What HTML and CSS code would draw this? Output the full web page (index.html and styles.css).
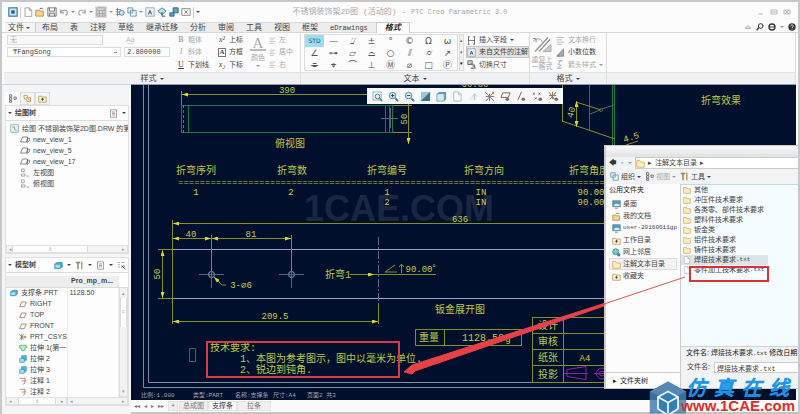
FILE: index.html
```html
<!DOCTYPE html>
<html lang="zh-CN">
<head>
<meta charset="utf-8">
<title>不锈钢装饰架2D图 (活动的) - PTC Creo Parametric 3.0</title>
<link rel="stylesheet" href="styles.css">
</head>
<body>
<svg class="defs" aria-hidden="true">
  <symbol id="i-app" viewBox="0 0 12 12"><rect x="1" y="1" width="10" height="10" fill="#cfe6ef" stroke="#2f7e9c" stroke-width="1.4"/><rect x="4" y="4" width="4" height="4" fill="#1d5f7c"/></symbol>
  <symbol id="i-new" viewBox="0 0 12 12"><path d="M2.5 1h5l3 3v7.500h-8zM7.500 1v3h3" fill="#fff" stroke="#999"/></symbol>
  <symbol id="i-open" viewBox="0 0 12 12"><path d="M1 4h4l1 1h4v6H1z" fill="#f4d58c" stroke="#b58f3d"/><path d="M5 3c1-2 4-2 5 0" fill="none" stroke="#555"/></symbol>
  <symbol id="i-save" viewBox="0 0 12 12"><path d="M1 1h10v10H1zM3 1v4h6V1M3 11V7.500h6V11" fill="#eee" stroke="#666"/></symbol>
  <symbol id="i-undo" viewBox="0 0 12 12"><path d="M2 3v4h4M2 6c2-3 8-3 8 1 0 2-1 2-2 3" fill="none" stroke="#999" stroke-width="1.300"/></symbol>
  <symbol id="i-redo" viewBox="0 0 12 12"><path d="M10 3v4H6M10 6c-2-3-8-3-8 1 0 2 1 2 2 3" fill="none" stroke="#aaa" stroke-width="1.300"/></symbol>
  <symbol id="i-grid" viewBox="0 0 12 12"><path d="M1 1h10v10H1zM1 4h10M4 4v7M8 4v7M1 8h10" fill="none" stroke="#999"/></symbol>
  <symbol id="i-regen" viewBox="0 0 12 12"><path d="M1 3h6M1 6h5M1 9h5M3 1v10" stroke="#777" fill="none"/><circle cx="8" cy="7" r="3" fill="#c7e4f1" stroke="#39809f"/></symbol>
  <symbol id="i-boxes" viewBox="0 0 12 12"><path d="M1 1h6v6H1zM4 4h7v7H4z" fill="#e9f3f8" stroke="#5892aa"/></symbol>
  <symbol id="i-note" viewBox="0 0 12 12"><rect x="1" y="1" width="10" height="10" fill="#eaf2f6" stroke="#8da3af"/><path d="M4 9l2-5 2 5M5 7h2" fill="none" stroke="#345"/></symbol>
  <symbol id="i-dim" viewBox="0 0 12 12"><path d="M1 5l5-4 5 4-5 4z" fill="#bfe0ee" stroke="#2d7695"/><path d="M6 6v5h4" fill="none" stroke="#333"/></symbol>
  <symbol id="i-find" viewBox="0 0 12 12"><path d="M1 7h5v4H1zM5 1h6v6H5z" fill="#5aa6c5" stroke="#235e79"/></symbol>
  <symbol id="i-close" viewBox="0 0 12 12"><path d="M1 2h10v8H1zM4 4l4 4M8 4l-4 4" fill="none" stroke="#777"/></symbol>
  <symbol id="i-lines" viewBox="0 0 12 12"><path d="M1 2h10M1 5h7M1 8h10M1 11h7" stroke="#bbb" stroke-width="1.200"/></symbol>
  <symbol id="i-folder" viewBox="0 0 12 12"><path d="M1 2h4l1 2h5v7H1z" fill="#fbedc2" stroke="#d1a850"/></symbol>
  <symbol id="i-file" viewBox="0 0 12 12"><path d="M2 1h5l3 3v7H2zM7 1v3h3" fill="#fff" stroke="#b5b5b5"/></symbol>
  <symbol id="i-sheet" viewBox="0 0 12 12"><path d="M2 1h8v10H2zM4 4h4M4 6h4M4 8h4" fill="#fff" stroke="#888"/></symbol>
  <symbol id="i-draw" viewBox="0 0 12 12"><rect x="1" y="1" width="10" height="10" fill="#e8f1f3" stroke="#88a5ad"/><path d="M3 4h3v3l3 2" fill="none" stroke="#4f9a77"/></symbol>
  <symbol id="i-view" viewBox="0 0 16 12"><path d="M1 10L4 2h8v6l-3 2zM12 4h3v4l-4 3V6z" fill="#fff" stroke="#444"/></symbol>
  <symbol id="i-ortho" viewBox="0 0 14 12"><path d="M2 1h4v4H2zM2 8h5v3H2zM9 11h4" fill="#fff" stroke="#888"/></symbol>
  <symbol id="i-tree" viewBox="0 0 12 12"><path d="M2 1h3v3H2zM2 5h3v3H2zM2 9h3v2H2zM8 4h3v3H8z" fill="none" stroke="#555"/></symbol>
  <symbol id="i-layers" viewBox="0 0 12 12"><path d="M1 2h5v3h4v5H5V7H2zM4 4l6 5" fill="#fff2d4" stroke="#bd9243"/></symbol>
  <symbol id="i-fav" viewBox="0 0 12 12"><path d="M1 3h4l1 1h5v7H1z" fill="#fdf1cd" stroke="#b79653"/><path d="M6 5v4M4 7h4" stroke="#333"/></symbol>
  <symbol id="i-part" viewBox="0 0 12 12"><path d="M1 4l3-2h7v6l-3 2H1z" fill="#4aa9cc" stroke="#3790b4"/><path d="M2 5h6v4H2z" fill="#aee2f2"/></symbol>
  <symbol id="i-plane" viewBox="0 0 12 12"><path d="M1 10l3-7h7L8 10z" fill="none" stroke="#8b5c3c"/></symbol>
  <symbol id="i-csys" viewBox="0 0 12 12"><path d="M4 1v10M4 6h7M1 2l6 8M1 10l6-8M9 4v4" fill="none" stroke="#75563f"/></symbol>
  <symbol id="i-ext1" viewBox="0 0 12 12"><path d="M1 2h10v4H9l-1 4H4L3 6H1z" fill="#baf0c4" stroke="#36a356"/></symbol>
  <symbol id="i-ext2" viewBox="0 0 12 12"><path d="M1 5h7v6H1z" fill="#a7e0f2" stroke="#2e92b3"/><path d="M4 1h7v7H8V5H4z" fill="#54b5d4" stroke="#2e92b3"/></symbol>
  <symbol id="i-annot" viewBox="0 0 12 12"><path d="M1 2h8v4H4M9 4v5l-3 2" fill="none" stroke="#a05a4a"/></symbol>
  <symbol id="i-tools" viewBox="0 0 12 12"><path d="M1 2h6M4 2v9" stroke="#8a8470" stroke-width="2"/><path d="M9 1v10" stroke="#c39b54" stroke-width="2"/></symbol>
  <symbol id="i-filter" viewBox="0 0 12 12"><path d="M1 2h3M1 5h3M1 8h3M6 2h4" stroke="#999"/><path d="M6 6l5 5M6 9c2-4 4-2 5-1" stroke="#333" fill="none"/></symbol>
  <symbol id="i-desk" viewBox="0 0 12 12"><rect x="1" y="1" width="10" height="8" fill="#4c9fc4" stroke="#698696"/><path d="M2 8c2-4 5-3 8-2v2z" fill="#d5eef3"/><path d="M4 11h4" stroke="#777"/></symbol>
  <symbol id="i-net" viewBox="0 0 12 12"><circle cx="5" cy="5" r="4" fill="#61b6d8" stroke="#2c7b9d"/><path d="M1 5h8M5 1v8" stroke="#b7e17e"/><path d="M7 7h4v4H7z" fill="#4f7f9e"/></symbol>
  <symbol id="i-zoom" viewBox="0 0 12 12"><path d="M1 1h9v9H1z" fill="#eef4f7" stroke="#9db4c0"/><circle cx="6" cy="6" r="2.500" fill="#e3f3fa" stroke="#3a7ca0"/><path d="M8 8l3 3" stroke="#3a7ca0" stroke-width="1.500"/></symbol>
  <symbol id="i-help" viewBox="0 0 12 12"><circle cx="6" cy="6" r="5.500" fill="#333"/><path d="M4 5c0-3 4-2.500 4-.5C8 6 6 6 6 7.500M6 8.500V10" stroke="#fff" stroke-width="1.200" fill="none"/></symbol>
  <symbol id="i-fmt" viewBox="0 0 20 16"><path d="M1 2h3v4M1 5c4-4 8-3 9 0" fill="none" stroke="#999"/><path d="M3 15L16 1M7 15L18 3" stroke="#999" stroke-width="1.500"/><path d="M11 15h8V8z" fill="#ccc" stroke="#aaa"/></symbol>
  <symbol id="i-dec" viewBox="0 0 12 12"><path d="M1 11h9V1zM3 11V8" fill="#aaa" stroke="#777"/></symbol>
</svg>

<div class="window">
  <header class="titlebar">
    <div class="quick">
      <svg><use href="#i-app"/></svg><i class="sep"></i>
      <svg><use href="#i-new"/></svg><svg><use href="#i-open"/></svg><svg><use href="#i-save"/></svg>
      <svg><use href="#i-undo"/></svg><i class="dd"></i><svg><use href="#i-redo"/></svg><i class="dd"></i>
      <span class="held"><svg><use href="#i-grid"/></svg></span><i class="dd"></i>
      <svg><use href="#i-regen"/></svg><svg><use href="#i-boxes"/></svg><i class="dd"></i><svg><use href="#i-note"/></svg><svg><use href="#i-dim"/></svg><svg><use href="#i-find"/></svg><svg><use href="#i-close"/></svg><i class="sep"></i><i class="dd dark"></i>
    </div>
    <div class="title">不锈钢装饰架2D图 (活动的) - <span>PTC Creo Parametric 3.0</span></div>
    <svg class="wincontrols" viewBox="0 0 36 8"><path d="M2 6h5M15 2h6v4h-6zM15 4h6M28 2h6v4h-6zM29 2l4 4M33 2l-4 4" fill="none" stroke="#bbb"/></svg>
  </header>

  <nav class="tabs">
    <a class="file" href="#">文件<i class="dd dark"></i></a><a href="#">布局</a><a href="#">表</a><a href="#">注释</a><a href="#">草绘</a><a href="#">继承迁移</a><a href="#">分析</a><a href="#">审阅</a><a href="#">工具</a><a href="#">视图</a><a href="#">框架</a><a class="mono" href="#">eDrawings</a><a class="active" href="#">格式</a>
    <span class="tabtools">
      <svg class="chev" viewBox="0 0 12 12"><path d="M2 8l4-4 4 4z" fill="#fff" stroke="#777"/></svg>
      <svg viewBox="0 0 12 12"><circle cx="7" cy="4.500" r="3.500" fill="none" stroke="#333" stroke-width="1.500"/><path d="M4 7l-3 4" stroke="#333" stroke-width="2"/></svg>
      <svg viewBox="0 0 12 12"><circle cx="6" cy="6" r="4.500" fill="#fff" stroke="#333" stroke-width="2"/><path d="M2 6h8" stroke="#333" stroke-width="1.500"/></svg><i class="dd"></i>
      <svg><use href="#i-help"/></svg>
    </span>
  </nav>

  <section class="ribbon">
    <div class="group style">
      <div class="body">
        <div class="fonts">
          <div class="line"><select class="preset" disabled aria-label="样式"><option>无</option></select><span class="pick">A͟a</span></div>
          <div class="line"><select class="face" aria-label="字体"><option>₸FangSong</option></select><input class="size" aria-label="字高" value="2.800000"></div>
        </div>
        <div class="col b1">
          <button disabled><b class="serif">B</b>粗体</button><button disabled><em class="serif">I</em>斜体</button><button><u class="serif">U</u>下划线</button>
        </div>
        <div class="col b2">
          <button><em class="serif">x²</em>上标</button><button><span class="boxed">A</span>方框</button><button><em class="serif">x₂</em>下标</button>
        </div>
        <button class="color" disabled><span class="big">A</span>颜色<i class="dd"></i></button>
        <div class="col b3">
          <button disabled><svg><use href="#i-lines"/></svg>左</button><button disabled><svg><use href="#i-lines"/></svg>居中</button><button disabled><svg><use href="#i-lines"/></svg>右</button>
        </div>
      </div>
      <div class="label">样式<i class="dd dark"></i></div>
    </div>
    <div class="group text">
      <div class="body">
        <div class="symbols">
          <button class="on">STD</button><button>—</button><button>⌰</button><button>±</button><button>°</button><button>©</button><button>Ω</button><button>ω</button>
          <button>∠</button><button>⊶</button><button>▱</button><button>⌓</button><button>○</button><button>⫽</button><button>⌭</button><button>↗</button>
          <button>⌯</button><button>⌖</button><button>⌒</button><button>⊥</button><button>Ⓜ</button><button>⌀</button><button>□</button><button>Ⓟ</button>
        </div>
        <div class="spin"><i>▴</i><i>▾</i><i class="more">▾</i></div>
        <div class="col fields">
          <button><svg viewBox="0 0 12 12"><path d="M2 1v10M10 1v10M2 6h8M1 1h3M1 11h3M8 1h3M8 11h3" fill="none" stroke="#555"/></svg>插入字段<i class="dd dark"></i></button>
          <button class="pressed"><svg><use href="#i-note"/></svg>来自文件的注解</button>
          <button><svg viewBox="0 0 12 12"><path d="M1 1h6v5H1zM5 4l6 6M9 5l2 6H5" fill="#ccc" stroke="#555"/></svg>切换尺寸</button>
        </div>
      </div>
      <div class="label">文本<i class="dd dark"></i></div>
    </div>
    <div class="group format">
      <div class="body">
        <button class="repeat" disabled><svg><use href="#i-fmt"/></svg><span>重复上</span><span>一格式</span></button>
        <div class="col">
          <button disabled><svg><use href="#i-lines"/></svg>文本换行</button>
          <button><svg><use href="#i-dec"/></svg>小数位数</button>
          <button disabled><svg viewBox="0 0 12 12"><path d="M3 1h6M6 1L3 6l4 1-5 4h6" fill="none" stroke="#999"/></svg>箭头样式<i class="dd"></i></button>
        </div>
      </div>
      <div class="label">格式<i class="dd dark"></i></div>
    </div>
    <div class="group rest"><div class="body"></div><div class="label"></div></div>
  </section>

  <div class="main">
    <aside class="side">
      <div class="sidetabs"><button class="on" aria-label="树"><svg><use href="#i-tree"/></svg></button><button aria-label="层"><svg><use href="#i-layers"/></svg></button><button aria-label="收藏"><svg><use href="#i-fav"/></svg></button></div>
      <section class="panel drawtree">
        <h2><i class="dd dark"></i>绘图树<span class="tools"><svg><use href="#i-sheet"/></svg><i class="dd dark"></i></span></h2>
        <ul>
          <li class="root"><svg><use href="#i-draw"/></svg>绘图 不锈钢装饰架2D图.DRW 的第</li>
          <li><svg class="w"><use href="#i-view"/></svg>new_view_1</li>
          <li><svg class="w"><use href="#i-view"/></svg>new_view_5</li>
          <li><svg class="w"><use href="#i-view"/></svg>new_view_17</li>
          <li><svg class="w"><use href="#i-ortho"/></svg>左视图</li>
          <li><svg class="w"><use href="#i-ortho"/></svg>俯视图</li>
        </ul>
        <div class="hscroll"><i>◂</i><i class="thumb t1">⦀</i><i>▸</i></div>
      </section>
      <section class="panel modeltree">
        <h2><i class="dd dark"></i>模型树<span class="tools"><svg><use href="#i-part"/></svg><i class="dd dark"></i><svg><use href="#i-tools"/></svg><i class="dd dark"></i><svg><use href="#i-sheet"/></svg><i class="dd dark"></i><svg><use href="#i-filter"/></svg></span></h2>
        <div class="model">
          <table>
            <thead><tr><th></th><th>Pro_mp_m...</th></tr></thead>
            <tbody>
              <tr class="root"><td><svg><use href="#i-part"/></svg>支撑条.PRT</td><td>1128.50</td></tr>
              <tr><td><svg><use href="#i-plane"/></svg>RIGHT</td><td></td></tr>
              <tr><td><svg><use href="#i-plane"/></svg>TOP</td><td></td></tr>
              <tr><td><svg><use href="#i-plane"/></svg>FRONT</td><td></td></tr>
              <tr><td><svg><use href="#i-csys"/></svg>PRT_CSYS</td><td></td></tr>
              <tr><td><svg><use href="#i-ext1"/></svg>拉伸 1(第一</td><td></td></tr>
              <tr><td><svg><use href="#i-ext2"/></svg>拉伸 2</td><td></td></tr>
              <tr><td><svg><use href="#i-ext2"/></svg>拉伸 3</td><td></td></tr>
              <tr><td><svg><use href="#i-annot"/></svg>注释 1</td><td></td></tr>
              <tr><td><svg><use href="#i-annot"/></svg>注释 2</td><td></td></tr>
            </tbody>
          </table>
          <div class="vscroll"><i>▴</i><i class="thumb">≡</i><i>▾</i></div>
        </div>
        <div class="twoscroll"><div class="hscroll"><i>◂</i><i class="thumb t2">⦀</i><i>▸</i></div><div class="hscroll"><i>◂</i><i>▸</i></div></div>
      </section>
    </aside>

    <div class="work">
      <div class="sheet">
        <svg class="drawing" viewBox="131 85 665 315" preserveAspectRatio="xMinYMin slice">
          <defs>
            <marker id="a" viewBox="0 0 6 4" refX="6" refY="2" markerWidth="6" markerHeight="4" markerUnits="userSpaceOnUse" orient="auto-start-reverse"><path d="M0 0l6 2-6 2z" fill="#d5dc2c"/></marker>
          </defs>
          <g class="frame"><path d="M143.500 84v303.500H796M148.500 84v298.500H796"/></g>
          <text class="mark" x="304" y="221">1CAE.COM</text>
          <g class="green">
            <path d="M181.500 105.500H412M181.500 132.500H412M181.500 105v28M188.500 105v28M385.500 105v28M389.500 105v28M392.500 105v28M589.500 85v46M612.500 85v62M614.500 85v62M189.500 348.500h6v13h-6z"/>
            <path d="M183.500 105v28" stroke="#4a74a8" stroke-dasharray="3 2"/>
            <circle cx="601" cy="110" r="1.500"/><path d="M590 114l10-4M602 109l12-4" stroke="#56666a"/>
          </g>
          <g class="plate">
            <path d="M172.500 249.500H620M172.500 298.500H620M172.500 249v50"/>
            <circle cx="211.500" cy="274.500" r="3"/><circle cx="291.500" cy="274.500" r="3"/>
            <path class="thin" d="M199 274.500h25M211.500 262v26M279 274.500h25M291.500 262v26M381 118.500h17M390.500 108v20"/>
            <path class="thin" d="M378.500 237v87" stroke-dasharray="8 2 2 2"/>
          </g>
          <g class="yl">
            <path d="M181.500 91v14M172.500 220v104M211.500 235v36M291.500 235v36M378.500 304v20M393 105.500h19M393 132.500h19"/>
            <path d="M158 249.500h15M158 298.500h15M562.500 85v37M562 121l53 18M576 102l25 8"/>
            <path d="M417 94.500H182" marker-end="url(#a)"/><path d="M408.500 104v40" marker-end="url(#a)"/>
            <path d="M620 223.500H173" marker-end="url(#a)"/>
            <path d="M173 238.500h38" marker-start="url(#a)" marker-end="url(#a)"/><path d="M212 238.500h79" marker-start="url(#a)" marker-end="url(#a)"/><path d="M162.500 250v48" marker-start="url(#a)" marker-end="url(#a)"/><path d="M173 321.500h205" marker-start="url(#a)" marker-end="url(#a)"/><path d="M576.500 101v26" marker-start="url(#a)" marker-end="url(#a)"/>
            <path d="M226 285h-4l-8-8" marker-end="url(#a)"/>
            <path d="M350 274.500h24" marker-end="url(#a)"/><path d="M374 274.500h62M397 272h-12l10-7M401.500 273v-9M399 267l2.500-3 2.500 3"/>
            <path d="M415.500 329.500h106v16h-106zM444.500 329.500v16M532.500 317.500H620M532.500 333.500H620M532.500 349.500H620M532.500 365.500H620M532.500 317v65M563.500 317v65M532 382.500h88M626 145l12-4"/>
          </g>
          <g class="purple"><path d="M567 369.500l19-3v13l-19-3zM564 373.500h24M594 373.500h14"/><circle cx="602" cy="373.500" r="5.500"/><circle cx="602" cy="373.500" r="2.500"/></g>
          <g class="num">
            <text x="287" y="93">390</text><text x="475" y="87">60.00</text><text x="460" y="222">636</text><text x="191" y="237">40</text><text x="251" y="237">81</text><text x="275" y="319">209.5</text>
            <text x="241" y="288">3-∅6</text><text x="419" y="272">90.00</text><text x="434" y="270">°</text>
            <text transform="translate(407 119) rotate(-90)">50</text><text transform="translate(160 274) rotate(-90)">50</text><text transform="translate(574 113) rotate(-75)">40</text><text transform="translate(632 140) rotate(-18)">4.5</text>
            <text x="196" y="195">1</text><text x="291" y="195">2</text><text x="387" y="195">1</text><text x="387" y="205">2</text><text x="481" y="195">IN</text><text x="481" y="205">IN</text><text x="591" y="195">90.00</text><text x="591" y="205">90.00</text>
            <text x="585" y="361">A4</text><text x="508" y="342">g</text>
            <text class="large" x="483" y="341">1128.50</text>
          </g>
          <text class="rule" x="178" y="185">==========================================================================================</text>
          <g class="cn">
            <text x="275" y="147">俯视图</text><text x="176" y="174">折弯序列</text><text x="277" y="174">折弯数</text><text x="367" y="174">折弯编号</text><text x="464" y="174">折弯方向</text><text x="569" y="174">折弯角度</text>
            <text x="701" y="104">折弯效果</text><text x="325" y="278">折弯1</text><text x="435" y="313">钣金展开图</text><text x="419" y="341">重量</text>
            <text x="538" y="329">设计</text><text x="538" y="345">审核</text><text x="538" y="361">纸张</text><text x="538" y="378">投影</text>
            <text x="210" y="351">技术要求:</text><text x="240" y="362">1、本图为参考图示，图中以毫米为单位.</text><text x="240" y="373">2、锐边到钝角.</text>
          </g>
          <g class="info"><text x="141" y="397">比例:1.000</text><text x="193" y="397">类型:PART</text><text x="235" y="397">名称:支撑条</text><text x="273" y="397">尺寸:A4</text><text x="307" y="397">页面2 共3</text></g>
          <rect class="redbox" x="207" y="342" width="192" height="35"/>
        </svg>
        <div class="viewbar">
          <button aria-label="重新调整"><svg><use href="#i-zoom"/></svg></button><button aria-label="放大"><svg viewBox="0 0 12 12"><circle cx="5" cy="5" r="3.500" fill="#e3f3fa" stroke="#3a7ca0"/><path d="M8 8l3 3" stroke="#3a7ca0" stroke-width="2"/><path d="M3 5h4M5 3v4" stroke="#235"/></svg></button><button aria-label="缩小"><svg viewBox="0 0 12 12"><circle cx="5" cy="5" r="3.500" fill="#e3f3fa" stroke="#3a7ca0"/><path d="M8 8l3 3" stroke="#3a7ca0" stroke-width="2"/><path d="M3 5h4" stroke="#235"/></svg></button><button aria-label="重画"><svg viewBox="0 0 12 12"><path d="M1 1h10v10H1z" fill="#9cc7d9"/><path d="M11 1v10H1z" fill="#3d748d"/></svg></button><button aria-label="显示样式"><svg viewBox="0 0 12 12"><path d="M1 3h8v8H1z" fill="#d7edf6" stroke="#74a4b9"/><path d="M1 3l2-2h8v8l-2 2V3z" fill="#5f99b1"/></svg></button><button aria-label="视图"><svg><use href="#i-file"/></svg></button><button aria-label="启动"><svg viewBox="0 0 12 12"><path d="M1 6h8v4H1z" fill="#eee"/><path d="M7 3v7M5 6l2-3 3 3" stroke="#bbb" fill="none"/></svg></button><button aria-label="基准"><svg viewBox="0 0 12 12"><path d="M1 1l10 10M11 1L2 11M6 3v8M2 6h9" stroke="#777" fill="none"/><path d="M9 1l2 2" stroke="#d49c3b" stroke-width="2"/></svg></button><button aria-label="平面显示"><svg viewBox="0 0 12 12"><path d="M1 7l2-5h8L9 7z" fill="none" stroke="#8b5c3c"/><circle cx="8" cy="9" r="2" fill="#777"/></svg></button><button aria-label="轴显示"><svg viewBox="0 0 12 12"><path d="M2 10L6 1" stroke="#8b5c3c"/><circle cx="8" cy="9" r="2" fill="#777"/></svg></button><button aria-label="点显示"><svg viewBox="0 0 12 12"><path d="M1 2l2 2M3 2L1 4M7 2l2 2M9 2L7 4M3 7l2 2M5 7L3 9" stroke="#8b5c3c"/><circle cx="9" cy="9" r="2" fill="#777"/></svg></button><button aria-label="坐标系显示"><svg viewBox="0 0 12 12"><path d="M1 1l6 8M9 1L2 9M1 5h8M5 1v8" stroke="#8b6c4c"/><circle cx="9" cy="9" r="2" fill="#777"/></svg></button>
        </div>
      </div>
      <nav class="sheets"><i>◂◂</i><i>◂</i><i>▸</i><i>▸▸</i><button aria-label="新建">+</button><a href="#">总成图</a><a class="active" href="#">支撑条</a><a href="#">拉条</a></nav>
    </div>
  </div>

  <div class="dialog" role="dialog" aria-label="注解文本目录">
    <div class="dlgtitle"></div>
    <div class="path"><span class="nav"><b>🡄</b><i>▪</i><i class="dd"></i></span><span class="crumbs"><svg><use href="#i-folder"/></svg><i>▸</i>注解文本目录<i>▸</i></span></div>
    <div class="cmds"><button><svg><use href="#i-boxes"/></svg>组织<i class="dd dark"></i></button><button disabled><svg><use href="#i-tree"/></svg>视图<i class="dd"></i></button><button><svg><use href="#i-tools"/></svg>工具<i class="dd dark"></i></button></div>
    <div class="panes">
      <div class="places">
        <h3>公用文件夹</h3>
        <ul>
          <li><svg><use href="#i-desk"/></svg>桌面</li><li><svg><use href="#i-open"/></svg>我的文档</li><li class="mono"><svg><use href="#i-desk"/></svg>user-20160611gp</li><li><svg><use href="#i-fav"/></svg>工作目录</li><li><svg><use href="#i-net"/></svg>网上邻居</li><li class="cur"><svg><use href="#i-folder"/></svg>注解文本目录</li><li><svg><use href="#i-fav"/></svg>收藏夹</li>
        </ul>
        <div class="foldertree"><i>▸</i>文件夹树</div>
      </div>
      <div class="right">
        <ul class="files">
          <li><svg><use href="#i-folder"/></svg>其他</li><li><svg><use href="#i-folder"/></svg>冲压件技术要求</li><li><svg><use href="#i-folder"/></svg>各类零、部件技术要求</li><li><svg><use href="#i-folder"/></svg>塑料件技术要求</li><li><svg><use href="#i-folder"/></svg>钣金类</li><li><svg><use href="#i-folder"/></svg>铝件技术要求</li><li><svg><use href="#i-folder"/></svg>铸件技术要求</li><li class="sel"><svg><use href="#i-file"/></svg>焊接技术要求<tt>.txt</tt></li><li><svg><use href="#i-file"/></svg>零件加工技术要求<tt>.txt</tt></li>
        </ul>
        <div class="meta"><b>文件名:</b> 焊接技术要求<tt>.txt</tt> <b>修改日期</b></div>
        <div class="entry"><label for="fn">文件名:</label><input id="fn" value="焊接技术要求.txt"></div>
      </div>
    </div>
  </div>

  <svg class="callout" viewBox="0 0 800 414" preserveAspectRatio="xMinYMin slice" aria-hidden="true">
    <rect x="690" y="267" width="78" height="14" fill="none" stroke="#dc3035" stroke-width="2"/>
    <path d="M685 277L604 304" stroke="#d85a5e"/>
    <path d="M604 303.500L412 365l-8 7 8 2 3-3 189-65z" fill="#e84048" stroke="#e84048"/>
  </svg>

  <div class="brand">
    <svg viewBox="0 0 46 36"><path d="M23 1l20 11v24H3V12z" fill="#477fb0" fill-opacity=".85"/><path d="M23 1l20 11-20 9L3 12z" fill="#5589b3"/><path d="M23 12l11 6v13l-11 7-11-7V18z" fill="#347db5" stroke="#e8f3f9" stroke-width="2"/><path d="M12 18l11 6 11-6M23 24v12" fill="none" stroke="#e8f3f9" stroke-width="2"/></svg>
    <div class="words"><div class="cnname"><span>仿</span><span>真</span><span>在</span><span>线</span></div><div class="url">www.1CAE.com</div></div>
  </div>
</div>
</body>
</html>
```
FILE: styles.css
```css
* { box-sizing: border-box; }
html, body { margin: 0; height: 100%; overflow: hidden; }
body { font: 7px/10px "Liberation Sans", "Noto Sans CJK SC", sans-serif; color: #444; background: #fafafa; }
ul { list-style: none; margin: 0; padding: 0; }
h2, h3 { margin: 0; font-size: 7px; }
i { font-style: normal; }
a { color: inherit; text-decoration: none; }
button { font: inherit; color: inherit; background: none; border: 0; padding: 0; display: flex; align-items: center; gap: 3px; white-space: nowrap; }
button:disabled { color: #aaa; }
svg { width: 9px; height: 9px; flex: none; }
tt, .mono { font-family: "Liberation Mono", "Noto Sans CJK SC", monospace; }
tt { font-size: 6px; }
.defs { position: absolute; width: 0; height: 0; }
.serif { font-family: "Liberation Serif", serif; font-size: 8px; width: 8px; text-align: center; }
.dd { display: inline-block; border: 2px solid transparent; border-top-color: #999; border-bottom: 0; flex: none; }
.dd.dark { border-top-color: #444; }
.sep { width: 1px; height: 11px; background: #ccc; }

.window { position: relative; height: 100vh; display: flex; flex-direction: column; border: solid #c6c8ca; border-width: 2px 2px 0 2px; overflow: hidden; background: #fcfcfc; }

.titlebar { display: grid; grid-template-columns: 1fr auto 1fr; align-items: center; height: 20px; padding: 0 6px; flex: none; }
.quick { display: flex; align-items: center; gap: 2px; }
.quick svg { width: 10px; height: 10px; }
.held { background: #ddd; padding: 1px; display: flex; }
.title { font: 8px/14px "Liberation Mono", "Noto Sans CJK SC", monospace; color: #aaa; white-space: nowrap; }
.title span { font-size: 7px; }
.wincontrols { width: 36px; height: 8px; justify-self: end; }

.tabs { display: flex; height: 11px; flex: none; font-size: 8px; line-height: 10px; padding-left: 3px; border-bottom: 1px solid #d8d8d8; }
.tabs a { padding: 0 6px; background: #ededed; border-top: 1px solid #dadada; white-space: nowrap; }
.tabs .file { display: flex; align-items: center; gap: 2px; padding: 0 5px 0 3px; border-right: 1px solid #ccc; background: #f5f5f5; }
.tabs .mono { font-size: 7px; padding-right: 8px; }
.tabs .active { background: #fcfcfc; border: 1px solid #ccc; border-bottom: 0; font-weight: bold; font-style: italic; padding: 0 8px; height: 11px; color: #222; }
.tabtools { margin-left: auto; display: flex; gap: 4px; padding-right: 2px; align-items: center; }
.tabtools svg { width: 8px; height: 8px; }

.ribbon { display: flex; height: 51px; flex: none; padding: 0 2px; }
.group { display: flex; flex-direction: column; border-right: 1px solid #ddd; }
.group .body { display: flex; height: 39px; padding: 1px 3px; }
.group .label { height: 12px; background: #f0f1f2; border-top: 1px solid #e2e2e2; display: flex; align-items: center; justify-content: center; gap: 3px; font-size: 8px; }
.style { width: 297px; }
.text { width: 229px; }
.format { width: 77px; }
.rest { flex: 1; }
.col { display: flex; flex-direction: column; justify-content: space-around; align-items: flex-start; }
.fonts { width: 166px; display: flex; flex-direction: column; gap: 2px; padding-top: 1px; }
.line { display: flex; gap: 3px; align-items: center; height: 10px; }
select, input { appearance: none; font: 7px/8px "Liberation Mono", "Noto Sans CJK SC", monospace; height: 10px; padding: 0 2px; margin: 0; border: 1px solid #ddd; border-radius: 0; background: #fff; color: #444; min-width: 0; }
select:disabled { color: #aaa; background: #f8f8f8; opacity: 1; }
.preset { width: 96px; }
.face { width: 114px; padding-left: 5px; }
select { background: linear-gradient(#888, #888) right 3px center / 3px 1px no-repeat, #fff; }
.size { width: 46px; }
.pick { color: #bbb; margin-left: 20px; }
.b1 { margin-left: 4px; width: 41px; }
.b2 { width: 32px; }
.b3 { margin-left: 3px; }
.b3 svg { width: 7px; height: 7px; }
.boxed { border: 1px solid #777; font: bold 7px/7px "Liberation Serif", serif; width: 8px; text-align: center; }
.color { flex-direction: column; gap: 2px; width: 16px; padding-top: 3px; }
.color .big { font: 15px/12px "Liberation Serif", serif; border-bottom: 2px solid #bbb; width: 16px; }
.symbols { display: grid; grid-template-columns: repeat(8, 19px); grid-template-rows: repeat(3, 12px); border: 1px solid #ddd; margin-right: 1px; }
.symbols button { justify-content: center; font: 9px/12px "DejaVu Sans", sans-serif; color: #555; }
.symbols .on { background: #9ddcf4; font-size: 6px; color: #246; }
.spin { display: flex; flex-direction: column; width: 8px; border: 1px solid #ddd; margin-right: 2px; background: #f2f2f2; }
.spin i { flex: 1; text-align: center; font-size: 5px; color: #777; }
.spin .more { color: #000; }
.fields button { height: 12px; padding: 0 1px; }
.pressed { background: #e3e3e3; outline: 1px solid #c5c5c5; outline-offset: -1px; }
.repeat { flex-direction: column; gap: 0; line-height: 7px; width: 25px; padding-top: 2px; }
.repeat svg { width: 20px; height: 17px; margin-bottom: 3px; }
.format .body { gap: 2px; padding-left: 0; }

.main { flex: 1; display: flex; min-height: 0; }
.side { width: 129px; flex: none; padding: 7px 2px 8px 3px; display: flex; flex-direction: column; background: #f4f5f6; border-top: 1px solid #d5d5d5; }
.sidetabs { display: flex; flex: none; }
.sidetabs button { width: 15px; height: 13px; justify-content: center; border: 1px solid #ddd; }
.sidetabs .on { background: #fcfcfc; border-color: #fcfcfc; }
.panel { background: #fdfdfd; display: flex; flex-direction: column; min-height: 0; overflow: hidden; }
.drawtree { height: 149px; flex: none; border: 1px solid #e0e0e0; }
.modeltree { flex: 1; margin-top: 3px; border: 1px solid #e0e0e0; }
.panel h2 { display: flex; align-items: center; gap: 3px; height: 15px; padding: 0 2px; border-bottom: 1px solid #ddd; flex: none; }
.tools { margin-left: auto; display: flex; gap: 4px; align-items: center; }
.panel ul { flex: 1; padding: 2px 0 0 4px; overflow: hidden; }
.panel li { display: flex; align-items: center; gap: 3px; height: 11px; padding-left: 10px; white-space: nowrap; }
.panel .root { padding-left: 0; }
.w { width: 10px; }
.hscroll { display: flex; justify-content: space-between; height: 8px; background: #f3f3f3; border: 1px solid #e0e0e0; flex: 1; color: #999; font-size: 5px; line-height: 6px; padding: 0 2px; }
.drawtree .hscroll { flex: none; }
.thumb { background: #fdfdfd; border: 1px solid #ddd; border-width: 0 1px; text-align: center; color: #bbb; }
.t1 { width: 76px; margin-right: auto; }
.t2 { width: 38px; }
.model { flex: 1; display: flex; min-height: 0; overflow: hidden; padding-top: 3px; }
table { flex: 1; border-collapse: collapse; table-layout: fixed; width: 115px; align-self: flex-start; }
th { height: 11px; background: #eee; border-bottom: 1px solid #ddd; text-align: left; padding: 0 0 0 4px; white-space: nowrap; }
td { height: 11px; padding: 0; white-space: nowrap; overflow: hidden; border-right: 1px solid #eee; }
td:first-child { padding-left: 13px; }
.root td:first-child { padding-left: 4px; }
td + td { padding-left: 2px; }
td svg { width: 8px; height: 8px; vertical-align: middle; margin-right: 3px; }
th:first-child { width: 61px; }
.vscroll { width: 9px; flex: none; margin-top: 11px; display: flex; flex-direction: column; background: #f2f2f2; border: 1px solid #ddd; font-size: 5px; color: #999; text-align: center; }
.vscroll .thumb { height: 29px; padding-top: 8px; margin-bottom: auto; }
.twoscroll { display: flex; flex: none; }
.work { flex: 1; display: flex; flex-direction: column; min-width: 0; }
.sheet { position: relative; flex: 1; min-height: 0; margin-right: 2px; background: #000f2c; overflow: hidden; border-top: 1px solid #99a; }
.drawing { display: block; width: 100%; height: 100%; }
.sheets { display: flex; height: 14px; flex: none; align-items: center; gap: 4px; padding-left: 3px; font-size: 7px; color: #777; border-bottom: 2px solid #c5c5c5; background: #fbfbfb; }
.sheets i { font-size: 6px; }
.sheets a, .sheets button { padding: 0 3px; height: 10px; background: #f0f0f0; border: 1px solid #e2e2e2; line-height: 8px; margin-right: -4px; }
.sheets button { padding: 0 2px; margin-right: -3px; }
.sheets a:last-child { padding: 0 9px; }
.sheets .active { background: #fff; color: #333; }

.drawing path, .drawing circle { fill: none; }
.drawing marker path { fill: #d5dc2c; stroke: none; }
.frame { stroke: #7f8ba3; }
.plate { stroke: #9ba5b8; }
.plate .thin { stroke: #5b667c; }
.green { stroke: #187c4c; }
.yl { stroke: #858f22; }
.purple { stroke: #9420a8; }
.num text { font: 9px "Liberation Mono", monospace; fill: #c4cc48; text-anchor: middle; }
.num .large { font-size: 10px; }
.rule { font: 9px "Liberation Mono", monospace; fill: #b2b83e; }
.cn { font: 10px "Liberation Mono", "Noto Sans CJK SC", monospace; fill: #bfc744; }
.info { font: 6px "Liberation Mono", "Noto Sans CJK SC", monospace; fill: #9ea6b2; }
.mark { font: bold 36px "Liberation Sans", sans-serif; fill: #1b2643; }
.redbox { fill: none; stroke: #d93a43; stroke-width: 2px; }
.viewbar { position: absolute; left: 236px; top: 3px; display: flex; background: #f8f9fa; height: 16px; padding: 0 2px; }
.viewbar button { width: 16px; justify-content: center; }
.viewbar svg { width: 11px; height: 11px; }

.dialog { position: absolute; left: 602px; right: -2px; top: 143px; height: 244px; display: flex; flex-direction: column; background: #f2f3f4; border: 1px solid #c9cbcd; border-width: 1px 0 1px 2px; }
.dlgtitle { height: 11px; flex: none; background: linear-gradient(#fafafa, #dfe1e3); }
.path { display: flex; height: 12px; flex: none; align-items: center; }
.nav { display: flex; width: 29px; align-items: center; justify-content: space-around; color: #bbb; }
.nav b { color: #333; }
.crumbs { flex: 1; display: flex; align-items: center; gap: 3px; background: #fff; border: 1px solid #ccc; height: 12px; }
.cmds { display: flex; height: 15px; flex: none; align-items: center; gap: 4px; padding-left: 4px; }
.cmds button { gap: 2px; }
.panes { flex: 1; display: flex; min-height: 0; }
.places { width: 75px; flex: none; display: flex; flex-direction: column; background: #fcfcfc; padding: 0 3px; border-right: 1px solid #ccc; }
.places h3 { height: 14px; line-height: 12px; font-weight: normal; color: #222; }
.places li { display: flex; align-items: center; gap: 2px; height: 12px; padding-left: 3px; white-space: nowrap; }
.places .mono { font-size: 6px; }
.places .cur { background: #f3f3f3; border: 1px solid #ddd; padding-left: 2px; }
.foldertree { margin: auto -3px 0; height: 16px; border-top: 1px solid #ccc; display: flex; align-items: center; gap: 3px; padding-left: 7px; color: #222; }
.right { flex: 1; display: flex; flex-direction: column; min-width: 0; }
.files { flex: 1; background: #f5fcff; border: 1px solid #cdd6da; border-left: 0; }
.files li { display: flex; align-items: center; height: 10px; gap: 3px; padding-left: 2px; width: 87px; white-space: nowrap; }
.files svg { width: 8px; height: 8px; }
.files .sel { background: #dde4e8; }
.files tt { margin-left: -3px; }
.meta { height: 13px; padding: 1px 0 0 5px; white-space: nowrap; color: #333; }
.meta b { font-weight: normal; color: #111; }
.entry { height: 28px; display: flex; align-items: flex-start; padding: 2px 0 0 6px; gap: 4px; }
.entry input { flex: 1; height: 11px; border-color: #ccc; }
.callout { position: absolute; left: -2px; top: -2px; width: 100vw; height: 100vh; pointer-events: none; }
.brand { position: absolute; right: 3px; bottom: 0; display: flex; align-items: flex-end; }
.brand svg { width: 42px; height: 34px; }
.words { display: flex; flex-direction: column; margin-left: -8px; }
.cnname { display: flex; justify-content: space-between; padding: 0 6px 0 5px; font: italic 20px/22px "Noto Sans CJK SC", sans-serif; color: #1c94e8; -webkit-text-stroke: 1px #1c94e8; }
.url { font: bold 15px/16px "Liberation Sans", sans-serif; color: #e32a25; }
```
